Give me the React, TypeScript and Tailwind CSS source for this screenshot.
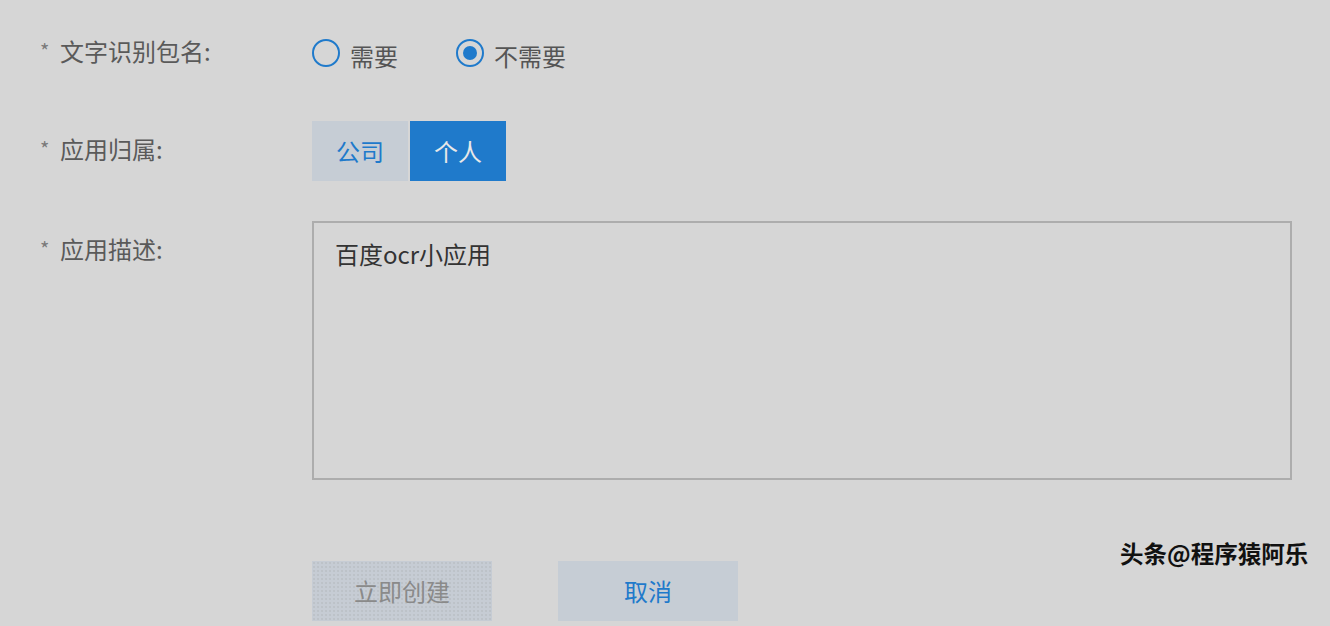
import React from 'react'

const font = { fontFamily: '"Noto Sans CJK SC", "Noto Sans", sans-serif' }

function Label({ text }: { text: string }) {
  return (
    <div className="flex w-[272px] shrink-0 items-center h-[60px] pb-[5px] text-[24px] text-[#5a5a5a]">
      <span className="w-[20px] text-[20px] text-[#7a7a7a]">*</span>
      <span>{text}:</span>
    </div>
  )
}

function Radio({ label, checked }: { label: string; checked?: boolean }) {
  return (
    <label className="flex items-center gap-[10px] text-[24px] text-[#555]">
      <span className="flex h-[28px] w-[28px] items-center justify-center rounded-full border-2 border-[#1f7acb]">
        {checked && <span className="h-[14px] w-[14px] rounded-full bg-[#1f7acb]" />}
      </span>
      <span className="mt-[6px]">{label}</span>
    </label>
  )
}

export default function App() {
  return (
    <div className="relative h-[626px] w-full overflow-hidden bg-[#d6d6d6] pl-[40px] pt-[23px]" style={font}>
      {/* 文字识别包名 */}
      <div className="flex">
        <Label text="文字识别包名" />
        <div className="flex h-[60px] items-center gap-[58px]">
          <Radio label="需要" />
          <Radio label="不需要" checked />
        </div>
      </div>

      {/* 应用归属 */}
      <div className="mt-[38px] flex">
        <Label text="应用归属" />
        <div className="flex gap-[2px]">
          <button className="h-[60px] w-[96px] bg-[#c6cdd5] text-[24px] text-[#1f7acb]">公司</button>
          <button className="h-[60px] w-[96px] bg-[#1f7acb] text-[24px] text-[#e8e8e8]">个人</button>
        </div>
      </div>

      {/* 应用描述 */}
      <div className="mt-[40px] flex">
        <Label text="应用描述" />
        <div className="h-[259px] w-[980px] border-2 border-[#adadad] px-[21px] pt-[13px] text-[24px] text-[#333]">
          百度ocr小应用
        </div>
      </div>

      {/* 按钮 */}
      <div className="mt-[81px] flex gap-[66px] pl-[272px]">
        <button className="h-[60px] w-[180px] bg-[#c6ccd4] bg-[radial-gradient(circle,#b4b7bb_0.5px,transparent_0.9px)] bg-[length:4px_4px] text-[24px] text-[#8a8a8a]">
          立即创建
        </button>
        <button className="h-[60px] w-[180px] bg-[#c6cdd5] text-[24px] text-[#1f7acb]">取消</button>
      </div>

      <div className="absolute left-[1120px] top-[536px] text-[23.5px] font-bold text-[#111]">头条@程序猿阿乐</div>
    </div>
  )
}
